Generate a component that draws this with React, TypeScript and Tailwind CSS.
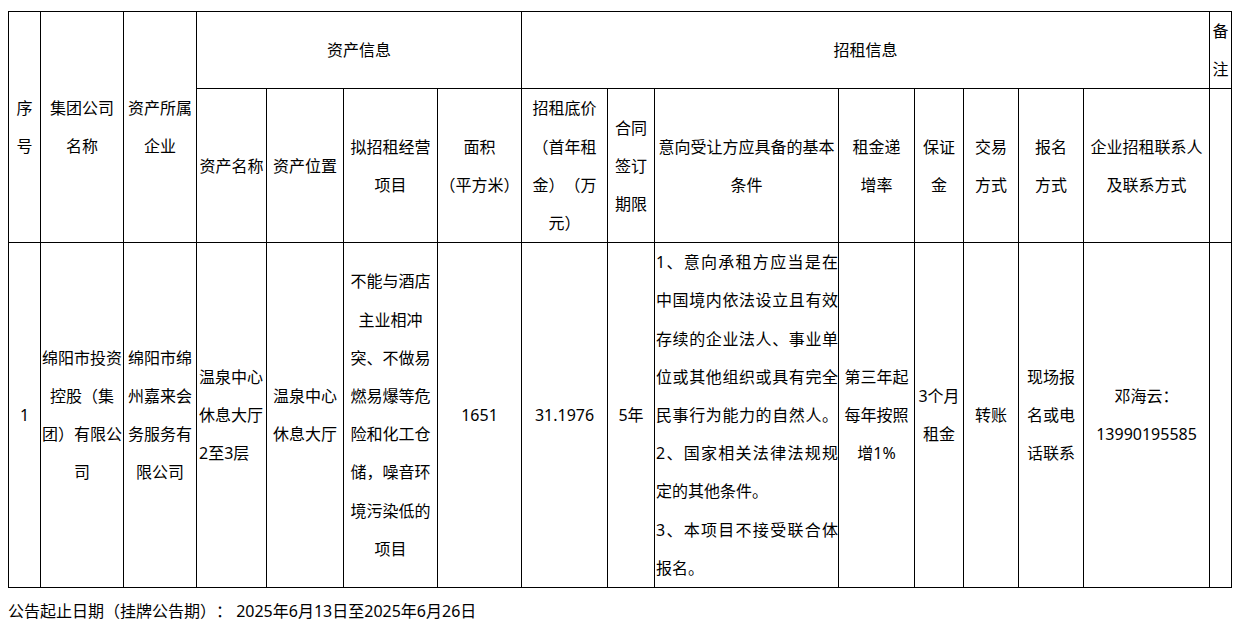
import React from "react";

const th = "border border-black px-px text-center align-middle font-normal whitespace-nowrap";
const td = "border border-black px-px text-center align-middle whitespace-nowrap";

const colWidths = [32, 83, 73, 70, 77, 94, 84, 86, 47, 184, 76, 49, 55, 65, 126, 22];

const conditions = [
  { text: "1、意向承租方应当是在", full: true },
  { text: "中国境内依法设立且有效", full: true },
  { text: "存续的企业法人、事业单", full: true },
  { text: "位或其他组织或具有完全", full: true },
  { text: "民事行为能力的自然人。", full: true },
  { text: "2、国家相关法律法规规", full: true },
  { text: "定的其他条件。", full: false },
  { text: "3、本项目不接受联合体", full: true },
  { text: "报名。", full: false },
];

const Lines = ({ lines }: { lines: string[] }) => (
  <>
    {lines.map((l, i) => (
      <div key={i}>{l}</div>
    ))}
  </>
);

const App = () => {
  return (
    <div
      className="min-h-screen bg-white pl-2 pt-[11px] text-[16px] leading-[38.2px] text-black [text-spacing-trim:space-all]"
      style={{ fontFamily: '"Noto Sans", "Noto Sans CJK SC", sans-serif' }}
    >
      <table className="w-[1224px] table-fixed border-collapse border border-black">
        <colgroup>
          {colWidths.map((w, i) => (
            <col key={i} style={{ width: w }} />
          ))}
        </colgroup>
        <thead>
          <tr>
            <th rowSpan={2} className={th}><Lines lines={["序", "号"]} /></th>
            <th rowSpan={2} className={th}><Lines lines={["集团公司", "名称"]} /></th>
            <th rowSpan={2} className={th}><Lines lines={["资产所属", "企业"]} /></th>
            <th colSpan={4} className={th}>资产信息</th>
            <th colSpan={8} className={th}>招租信息</th>
            <th className={th}><Lines lines={["备", "注"]} /></th>
          </tr>
          <tr>
            <th className={th}>资产名称</th>
            <th className={th}>资产位置</th>
            <th className={th}><Lines lines={["拟招租经营", "项目"]} /></th>
            <th className={th}><Lines lines={["面积", "（平方米）"]} /></th>
            <th className={th}><Lines lines={["招租底价", "（首年租", "金）（万", "元）"]} /></th>
            <th className={th}><Lines lines={["合同", "签订", "期限"]} /></th>
            <th className={th}><Lines lines={["意向受让方应具备的基本", "条件"]} /></th>
            <th className={th}><Lines lines={["租金递", "增率"]} /></th>
            <th className={th}><Lines lines={["保证", "金"]} /></th>
            <th className={th}><Lines lines={["交易", "方式"]} /></th>
            <th className={th}><Lines lines={["报名", "方式"]} /></th>
            <th className={th}><Lines lines={["企业招租联系人", "及联系方式"]} /></th>
            <th className={th}></th>
          </tr>
        </thead>
        <tbody>
          <tr>
            <td className={td}>1</td>
            <td className={td}><Lines lines={["绵阳市投资", "控股（集", "团）有限公", "司"]} /></td>
            <td className={td}><Lines lines={["绵阳市绵", "州嘉来会", "务服务有", "限公司"]} /></td>
            <td className={`${td} !text-left pl-[2px]`}><Lines lines={["温泉中心", "休息大厅", "2至3层"]} /></td>
            <td className={td}><Lines lines={["温泉中心", "休息大厅"]} /></td>
            <td className={td}>
              <Lines lines={["不能与酒店", "主业相冲", "突、不做易", "燃易爆等危", "险和化工仓", "储，噪音环", "境污染低的", "项目"]} />
            </td>
            <td className={td}>1651</td>
            <td className={td}>31.1976</td>
            <td className={td}>5年</td>
            <td className="border border-black pl-px text-left align-middle whitespace-nowrap">
              {conditions.map((c, i) => (
                <div key={i} className={c.full ? "text-justify [text-align-last:justify]" : ""}>
                  {c.text}
                </div>
              ))}
            </td>
            <td className={td}><Lines lines={["第三年起", "每年按照", "增1%"]} /></td>
            <td className={td}><Lines lines={["3个月", "租金"]} /></td>
            <td className={td}>转账</td>
            <td className={td}><Lines lines={["现场报", "名或电", "话联系"]} /></td>
            <td className={td}><Lines lines={["邓海云：", "13990195585"]} /></td>
            <td className={td}></td>
          </tr>
        </tbody>
      </table>
      <p className="mt-[4px]">公告起止日期（挂牌公告期）： 2025年6月13日至2025年6月26日</p>
    </div>
  );
};

export default App;
